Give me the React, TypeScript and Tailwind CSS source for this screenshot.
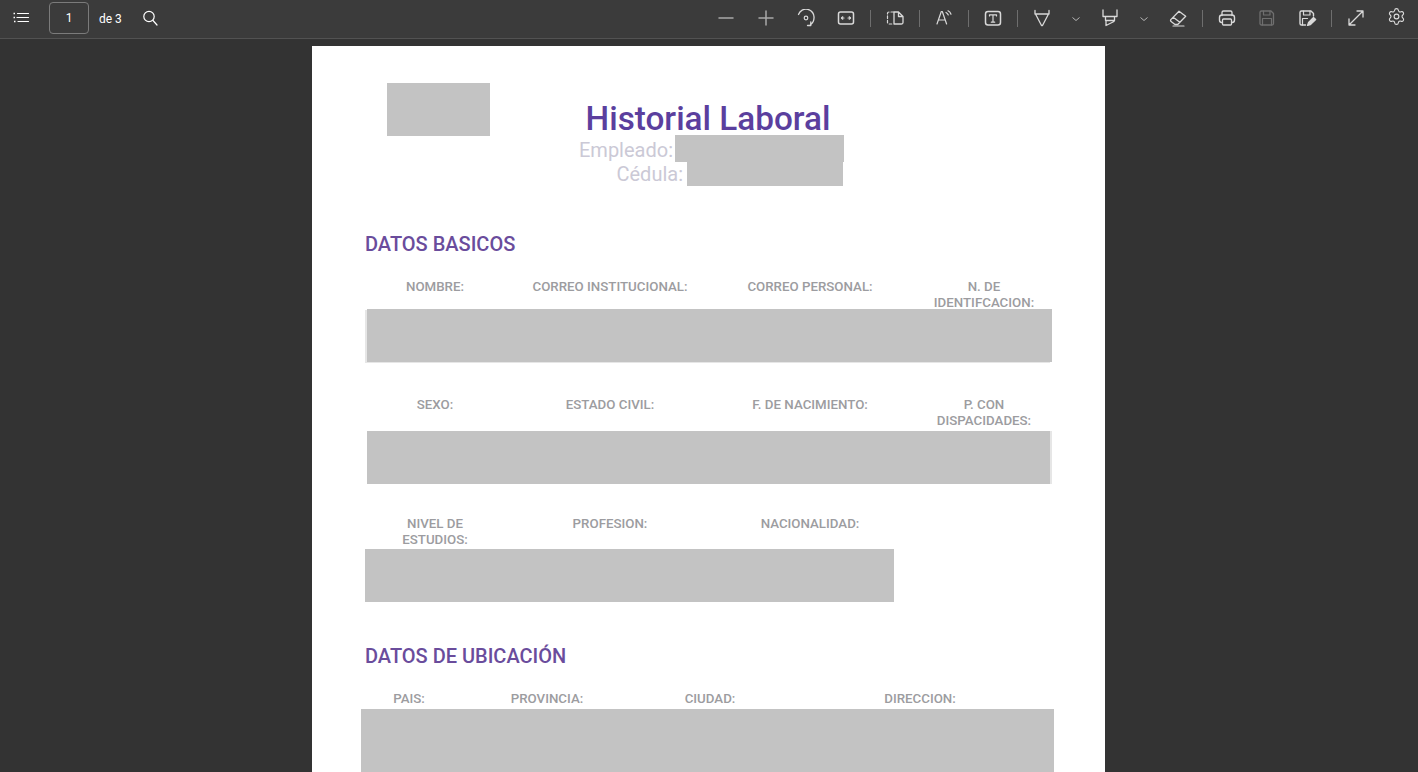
import * as React from "react";
import { Settings } from "lucide-react";

function Icon({ children, className = "text-[#d9d9d9]" }: { children: React.ReactNode; className?: string }) {
  return (
    <button type="button" className={`flex h-[38px] w-10 shrink-0 items-center justify-center ${className}`}>
      <svg width="20" height="20" viewBox="0 0 20 20" fill="none" stroke="currentColor" strokeWidth="1.2" strokeLinecap="round" strokeLinejoin="round">
        {children}
      </svg>
    </button>
  );
}

function Chevron() {
  return (
    <button type="button" className="flex h-[38px] w-7 shrink-0 items-center justify-center text-[#b5b5b5]">
      <svg width="10" height="10" viewBox="0 0 10 10" fill="none" stroke="currentColor" strokeWidth="1">
        <path d="M1.5 3.5 5 6.5l3.5-3" />
      </svg>
    </button>
  );
}

function Sep() {
  return <div className="mx-1 -mt-0.5 h-[17px] w-px shrink-0 bg-[#6e6e6e]" />;
}

function Toolbar() {
  return (
    <header className="flex h-[39px] shrink-0 items-center justify-between border-b border-[#525252] bg-[#3b3b3b] pl-px pr-0.5">
      <div className="flex items-center">
        <Icon className="text-white">
          <path d="M2.500 4.500h1.500M2.500 8.500h1.500M3 12.500h1.500" strokeWidth="1.500" strokeLinecap="butt" />
          <path d="M6.500 4.500h11M6 8.500h11.500M7 12.500h10.500" />
        </Icon>
        <div className="ml-2 -mt-0.5 flex h-[32px] w-10 items-center justify-center rounded-sm border border-[#7b7b7b] text-xs text-white">1</div>
        <span className="ml-2.5 text-xs text-white">de 3</span>
        <div className="ml-2">
          <Icon className="text-white">
            <circle cx="9" cy="7.500" r="5.200" />
            <path d="m13 11.500 4 4.500" />
          </Icon>
        </div>
      </div>
      <div className="flex items-center">
        <Icon className="text-[#a9a9a9]">
          <path d="M3 9h14" strokeWidth="1.500" />
        </Icon>
        <Icon className="text-[#a9a9a9]">
          <path d="M3 9h14M10 2v14" strokeWidth="1.500" />
        </Icon>
        <Icon>
          <path d="M2.500 5.500A8 8 0 0 1 18 9a8 8 0 0 1-3.500 6.500" strokeWidth="1.300" />
          <path d="M11.500 16.500h3.300v-3.500" strokeWidth="1.300" />
          <circle cx="10" cy="9" r="1.800" />
        </Icon>
        <Icon>
          <rect x="2.500" y="3" width="15" height="12" rx="2" strokeWidth="1.500" />
          <path d="M5.500 9h2.500M12 9h2.500" />
          <path d="M6.800 7.800 5.500 9l1.300 1.200M13.200 7.800 14.500 9l-1.300 1.200" />
        </Icon>
        <Sep />
        <Icon>
          <path d="M8.500 3H4a1.500 1.500 0 0 0-1.500 1.500v9A1.500 1.500 0 0 0 4 15h4.500" strokeDasharray="2.500 2" />
          <path d="M9 3h4.500L18 7.500v6a1.500 1.500 0 0 1-1.500 1.500H9zM13.500 3v4.500H18" strokeWidth="1.300" />
        </Icon>
        <Sep />
        <Icon>
          <path d="m3 15 4.300-12.500h1L12.600 15M4.500 11h6.300" />
          <path d="M12 3.500c1.200.6 1.900 1.400 2.300 2.500M14 1.800c1.500.8 2.500 1.900 3 3.400" />
        </Icon>
        <Sep />
        <Icon>
          <rect x="2.500" y="2.500" width="15" height="13.500" rx="2.500" strokeWidth="1.500" />
          <path d="M6.500 7V5.800h7V7M10 5.800v7.400M8.300 13.200h3.400" />
        </Icon>
        <Sep />
        <Icon>
          <path d="M3 1.500V5h14V1.500M3.500 5l6 11.500h1l6-11.500" strokeWidth="1.300" />
        </Icon>
        <Chevron />
        <Icon>
          <path d="M3 1v6.500h14V1M5.500 7.500v4h9v-4M6 11.500V16.500l8-4v-1" strokeWidth="1.300" />
        </Icon>
        <Chevron />
        <Icon>
          <path d="m2.800 10.600 8.200-8.300 6.700 5-8 8.200H7l-3.600-2.800a1.400 1.400 0 0 1-.6-2.100ZM5.300 8.300l6.500 5" strokeWidth="1.300" />
          <path d="M5 17h11" />
        </Icon>
        <Sep />
        <Icon>
          <path d="M5 6.500V3.500A1.500 1.500 0 0 1 6.500 2h7A1.500 1.500 0 0 1 15 3.500v3" strokeWidth="1.300" />
          <rect x="2.500" y="6" width="15" height="7.500" rx="2.500" strokeWidth="1.400" />
          <rect x="5.500" y="10" width="9" height="6" rx="1" fill="#3b3b3b" strokeWidth="1.300" />
        </Icon>
        <Icon className="text-[#6f6f6f]">
          <path d="M4.500 2H14l2.500 2.500v10A1.500 1.500 0 0 1 15 16H4.500A1.500 1.500 0 0 1 3 14.500v-11A1.500 1.500 0 0 1 4.500 2Z" strokeWidth="1.300" />
          <path d="M6.500 2v4h6.500V2M5.500 16V9.500h9V16" />
        </Icon>
        <Icon>
          <path d="M8.500 16h-4A1.500 1.500 0 0 1 3 14.500v-11A1.500 1.500 0 0 1 4.500 2H14l2.500 2.500V7" strokeWidth="1.400" />
          <path d="M6.500 2v4h6.500V2M5.500 16V9.500h5" />
          <path d="m10.500 16.500 1-3 5-5 2.200 2-5.200 5.200z" fill="currentColor" />
        </Icon>
        <Sep />
        <Icon>
          <path d="M3 16 17 2M11 2h6v6M3 10v6h6" strokeWidth="1.300" />
        </Icon>
        <button type="button" className="flex h-[38px] w-10 shrink-0 items-center justify-center text-[#dcdcdc]">
          <Settings size={19} strokeWidth={1.4} className="-mt-[5px]" />
        </button>
      </div>
    </header>
  );
}

type LabelRowProps = { labels: React.ReactNode[]; className: string };

function LabelRow({ labels, className }: LabelRowProps) {
  return (
    <div className={`grid pt-px text-center text-[13.3px] leading-4 font-medium text-[#9c9ca0] ${className}`}>
      {labels.map((label, i) => (
        <div key={i}>{label}</div>
      ))}
    </div>
  );
}

function Redacted({ className }: { className: string }) {
  return <div className={`bg-[#c3c3c3] ${className}`} />;
}

const cols = "grid-cols-[140px_210px_190px_158px]";

export default function App() {
  return (
    <div className="flex h-[772px] flex-col overflow-hidden bg-[#333333] font-['Roboto',sans-serif]">
      <Toolbar />
      <main className="min-h-0 flex-1 overflow-hidden pt-[7px]">
        <div className="ml-[312px] h-[800px] w-[793px] bg-white pt-[37px]">
          {/* Encabezado */}
          <div className="flex">
            <Redacted className="ml-[75px] h-[53px] w-[103px]" />
            <div className="ml-[63px] mt-[18px] w-[310px]">
              <h1 className="h-[34px] pt-px text-center text-[33.3px] leading-[34px] font-medium text-[#5b3f9e]">Historial Laboral</h1>
              <div className="flex h-[27px] items-start justify-end gap-[2px] pr-[19px] text-xl text-[#cbc9d6]">
                <span className="mt-px">Empleado:</span>
                <Redacted className="h-[27px] w-[169px]" />
              </div>
              <div className="flex h-[24px] items-center justify-end gap-1 pr-5 text-xl text-[#cbc9d6]">
                <span>Cédula:</span>
                <Redacted className="h-[24px] w-[156px]" />
              </div>
            </div>
          </div>

          {/* Datos basicos */}
          <div className="ml-[53px]">
            <h2 className="mt-[46px] text-xl leading-6 font-medium text-[#6a4c9c]">DATOS BASICOS</h2>
            <LabelRow
              className={`mt-[22px] h-[31px] ${cols}`}
              labels={["NOMBRE:", "CORREO INSTITUCIONAL:", "CORREO PERSONAL:", <>N. DE<br />IDENTIFCACION:</>]}
            />
            <Redacted className="ml-0.5 h-[53px] w-[685px] shadow-[-2px_1px_0_#e6e6e6]" />
            <LabelRow
              className={`mt-[34px] h-[35px] ${cols}`}
              labels={["SEXO:", "ESTADO CIVIL:", "F. DE NACIMIENTO:", <>P. CON<br />DISPACIDADES:</>]}
            />
            <Redacted className="ml-0.5 h-[53px] w-[683px] shadow-[2px_0_0_#e6e6e6]" />
            <LabelRow
              className={`mt-[31px] h-[34px] ${cols}`}
              labels={[<>NIVEL DE<br />ESTUDIOS:</>, "PROFESION:", "NACIONALIDAD:", ""]}
            />
            <Redacted className="h-[53px] w-[529px]" />

            {/* Datos de ubicacion */}
            <h2 className="mt-[42px] text-xl leading-6 font-medium text-[#6a4c9c]">DATOS DE UBICACIÓN</h2>
            <LabelRow
              className="mt-[22px] h-[19px] grid-cols-[88px_188px_138px_282px]"
              labels={["PAIS:", "PROVINCIA:", "CIUDAD:", "DIRECCION:"]}
            />
            <Redacted className="-ml-1 h-[70px] w-[693px]" />
          </div>
        </div>
      </main>
    </div>
  );
}
